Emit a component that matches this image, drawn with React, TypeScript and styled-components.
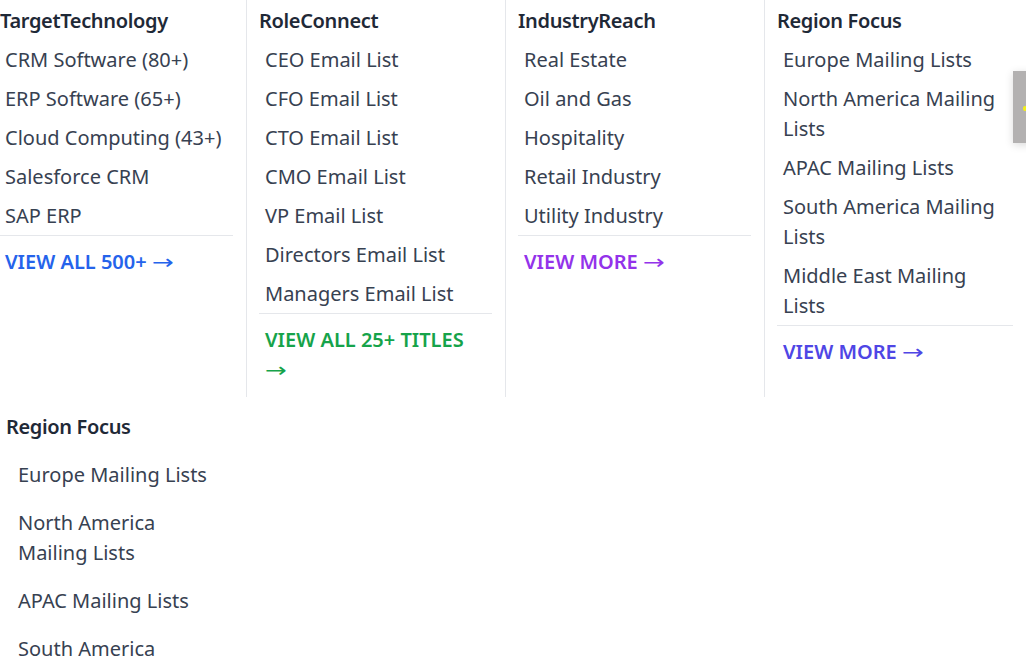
import React from "react";
import styled, { createGlobalStyle } from "styled-components";

const GlobalStyle = createGlobalStyle`
  html, body { margin: 0; padding: 0; background: #ffffff; }
  body {
    font-family: "Segoe UI", "Noto Sans", "Open Sans", sans-serif;
    -webkit-font-smoothing: antialiased;
  }
  ul { margin: 0; padding: 0; list-style: none; }
`;

const Page = styled.div`
  position: relative;
  width: 1026px;
  height: 666px;
  overflow: hidden;
`;

const Menu = styled.div`
  display: grid;
  grid-template-columns: 246px 259px 259px 262px;
  align-items: stretch;
`;

const Column = styled.div<{ $first?: boolean }>`
  padding: 6px 13px 12px ${(p) => (p.$first ? "0" : "12px")};
  border-left: ${(p) => (p.$first ? "none" : "1px solid #e5e7eb")};
`;

const Heading = styled.h3`
  margin: 0 0 4px;
  font-size: 20px;
  line-height: 30px;
  font-weight: 600;
  letter-spacing: -0.35px;
  color: #1f2937;
`;

const List = styled.ul`
  border-bottom: 1px solid #e5e7eb;
`;

const Item = styled.li<{ $first?: boolean }>`
  padding: 4.5px 6px 4.5px ${(p) => (p.$first ? "5px" : "6px")};
  font-size: 20px;
  line-height: 30px;
  color: #374151;
`;

const MoreLink = styled.a<{ $color: string; $first?: boolean }>`
  display: block;
  padding: 11px 8px 0 ${(p) => (p.$first ? "5px" : "6px")};
  font-size: 20px;
  line-height: 30px;
  font-weight: 600;
  text-transform: uppercase;
  text-decoration: none;
  color: ${(p) => p.$color};
`;

const Arrow = styled.span`
  display: inline-block;
  width: 21px;
  font-family: "DejaVu Sans", sans-serif;
  font-weight: 400;
  transform: scaleX(1.3);
  transform-origin: left center;
`;

const Mobile = styled.div`
  width: 230px;
  padding: 14px 6px 0;
`;

const MobileHeading = styled.h3`
  margin: 1px 0 9px;
  font-size: 20px;
  line-height: 30px;
  font-weight: 600;
  letter-spacing: -0.35px;
  color: #1f2937;
`;

const MobileItem = styled.li`
  padding: 9px 12px;
  font-size: 20px;
  line-height: 30px;
  color: #374151;
`;

const SideTab = styled.div`
  position: absolute;
  left: 1013px;
  top: 71px;
  width: 20px;
  height: 72px;
  background: #b3b1b1;
  box-shadow: 0 2px 8px rgba(0, 0, 0, 0.15);
`;

const Dot = styled.span`
  position: absolute;
  left: 10px;
  top: 35px;
  width: 4px;
  height: 5px;
  border-radius: 2px;
  background: #f2ef1a;
`;

type Col = { title: string; items: string[]; link: string; color: string };

const columns: Col[] = [
  {
    title: "TargetTechnology",
    items: ["CRM Software (80+)", "ERP Software (65+)", "Cloud Computing (43+)", "Salesforce CRM", "SAP ERP"],
    link: "View All 500+",
    color: "#2563eb",
  },
  {
    title: "RoleConnect",
    items: [
      "CEO Email List",
      "CFO Email List",
      "CTO Email List",
      "CMO Email List",
      "VP Email List",
      "Directors Email List",
      "Managers Email List",
    ],
    link: "View All 25+ Titles",
    color: "#16a34a",
  },
  {
    title: "IndustryReach",
    items: ["Real Estate", "Oil and Gas", "Hospitality", "Retail Industry", "Utility Industry"],
    link: "View More",
    color: "#9333ea",
  },
  {
    title: "Region Focus",
    items: [
      "Europe Mailing Lists",
      "North America Mailing Lists",
      "APAC Mailing Lists",
      "South America Mailing Lists",
      "Middle East Mailing Lists",
    ],
    link: "View More",
    color: "#4f46e5",
  },
];

const mobileItems = [
  "Europe Mailing Lists",
  "North America Mailing Lists",
  "APAC Mailing Lists",
  "South America Mailing Lists",
  "Middle East Mailing Lists",
];

export default function App() {
  return (
    <Page>
      <GlobalStyle />
      <Menu>
        {columns.map((c, i) => (
          <Column key={c.title + i} $first={i === 0}>
            <Heading>{c.title}</Heading>
            <List>
              {c.items.map((it) => (
                <Item key={it} $first={i === 0}>
                  {it}
                </Item>
              ))}
            </List>
            <MoreLink href="#" $color={c.color} $first={i === 0}>
              {c.link} <Arrow>→</Arrow>
            </MoreLink>
          </Column>
        ))}
      </Menu>
      <Mobile>
        <MobileHeading>Region Focus</MobileHeading>
        <ul>
          {mobileItems.map((it) => (
            <MobileItem key={it}>{it}</MobileItem>
          ))}
        </ul>
      </Mobile>
      <SideTab>
        <Dot />
      </SideTab>
    </Page>
  );
}
